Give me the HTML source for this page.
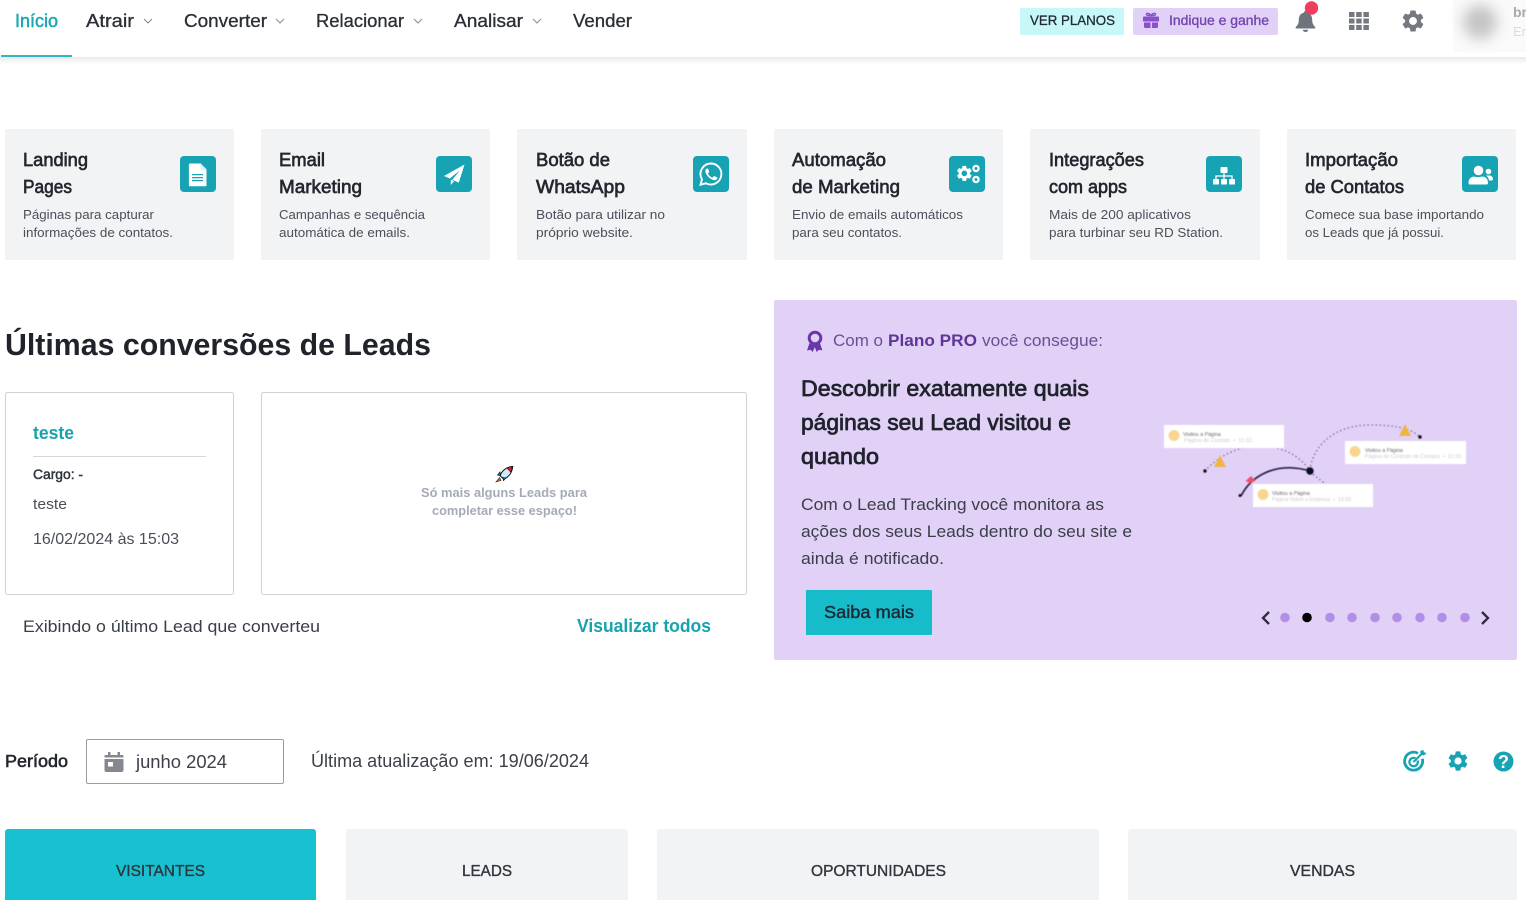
<!DOCTYPE html>
<html lang="pt-BR"><head><meta charset="utf-8"><title>RD Station</title>
<style>
html,body{margin:0;padding:0;background:#fff;width:1526px;height:900px;overflow:hidden}
svg{display:block;position:absolute;left:0;top:0}
text{font-family:"Liberation Sans",sans-serif;white-space:pre}
.nav{font-size:18px;fill:#2a2e36;stroke:#2a2e36;stroke-width:.3}
.t{font-size:18.500px;fill:#23262e;stroke:#23262e;stroke-width:.65}
.d{font-size:13px;fill:#4a4f5a}
.p{font-size:17px;fill:#3a3e48}
.h{font-size:22.500px;fill:#20232d;stroke:#20232d;stroke-width:.75}
.tab{font-size:16px;fill:#30343c;stroke:#30343c;stroke-width:.35}
</style></head><body>
<svg width="1526" height="900" viewBox="0 0 1526 900" xmlns="http://www.w3.org/2000/svg">
<defs>
<linearGradient id="sh" x1="0" y1="0" x2="0" y2="1"><stop offset="0" stop-color="#e9eaec"/><stop offset="1" stop-color="#fff"/></linearGradient>
<filter id="b6" x="-100%" y="-100%" width="300%" height="300%"><feGaussianBlur stdDeviation="7"/></filter>
<filter id="b1"><feGaussianBlur stdDeviation=".5"/></filter>
<path id="gear" d="M19.14 12.94c.04-.3.06-.61.06-.94 0-.32-.02-.64-.07-.94l2.03-1.58a.49.49 0 0 0 .12-.61l-1.92-3.32a.488.488 0 0 0-.59-.22l-2.39.96c-.5-.38-1.03-.7-1.62-.94l-.36-2.54a.484.484 0 0 0-.48-.41h-3.84c-.24 0-.43.17-.47.41l-.36 2.54c-.59.24-1.13.57-1.62.94l-2.39-.96c-.22-.08-.47 0-.59.22L2.74 8.87c-.12.21-.08.47.12.61l2.03 1.58c-.05.3-.09.63-.09.94s.02.64.07.94l-2.03 1.58a.49.49 0 0 0-.12.61l1.92 3.32c.12.22.37.29.59.22l2.39-.96c.5.38 1.03.7 1.62.94l.36 2.54c.05.24.24.41.48.41h3.84c.24 0 .44-.17.47-.41l.36-2.54c.59-.24 1.13-.56 1.62-.94l2.39.96c.22.08.47 0 .59-.22l1.92-3.32c.12-.22.07-.47-.12-.61l-2.01-1.58zM12 15.6A3.6 3.6 0 1 1 12 8.4a3.6 3.6 0 0 1 0 7.2z"/>
</defs>

<!-- header -->
<rect x="0" y="57" width="1526" height="7" fill="url(#sh)"/>
<rect x="1" y="55" width="71" height="2" fill="#2fb9c6"/>
<text x="15" y="27" font-size="18" fill="#17a9b5" stroke="#17a9b5" stroke-width=".5" textLength="43" lengthAdjust="spacingAndGlyphs">Início</text>
<text class="nav" x="86" y="27" textLength="48" lengthAdjust="spacingAndGlyphs">Atrair</text>
<text class="nav" x="184" y="27" textLength="83" lengthAdjust="spacingAndGlyphs">Converter</text>
<text class="nav" x="316" y="27" textLength="88" lengthAdjust="spacingAndGlyphs">Relacionar</text>
<text class="nav" x="454" y="27" textLength="69" lengthAdjust="spacingAndGlyphs">Analisar</text>
<text class="nav" x="573" y="27" textLength="59" lengthAdjust="spacingAndGlyphs">Vender</text>
<g fill="none" stroke="#8b8f96" stroke-width="1.100">
<path d="M144 19l4 4 4-4M276 19l4 4 4-4M414 19l4 4 4-4M533 19l4 4 4-4"/>
</g>
<rect x="1020" y="8" width="104" height="27" rx="2" fill="#c8f7fa"/>
<text x="1030" y="25" font-size="14" fill="#1f2a36" stroke="#1f2a36" stroke-width=".3" textLength="85" lengthAdjust="spacingAndGlyphs">VER PLANOS</text>
<rect x="1133" y="8" width="145" height="27" rx="2" fill="#e2d1f7"/>
<path d="M1144 22.500h6.500v5.500h-5.300a1.200 1.200 0 0 1-1.200-1.200zM1151.900 22.500h6.100v4.300a1.200 1.200 0 0 1-1.200 1.200h-4.900zM1143 17.500a1 1 0 0 1 1-1h14a1 1 0 0 1 1 1v4h-16z" fill="#8a50cc"/>
<path d="M1151 15.500c-2-3-5-2.500-4.500-.8.3 1 2.500.8 4.500.8zm0 0c2-3 5-2.500 4.500-.8-.3 1-2.500.8-4.500.8z" fill="none" stroke="#8a50cc" stroke-width="1.500"/>
<text x="1169" y="25" font-size="14" fill="#7445b0" stroke="#7445b0" stroke-width=".35" textLength="100" lengthAdjust="spacingAndGlyphs">Indique e ganhe</text>
<path d="M1305.500 11c1 0 1.700.7 1.700 1.700 3.500.8 5 3.600 5 7 0 3.800 1.200 5.300 3 7.300.5.600.2 1.500-.7 1.500h-18c-.9 0-1.200-.9-.7-1.500 1.800-2 3-3.500 3-7.300 0-3.400 1.500-6.200 5-7 0-1 .7-1.700 1.700-1.700z" fill="#6f747c"/>
<path d="M1302.800 29.800h5.400a2.700 2.200 0 0 1-5.400 0z" fill="#6f747c"/>
<circle cx="1311.500" cy="8" r="6.700" fill="#ee3d5f"/>
<g fill="#74787f">
<rect x="1349" y="12" width="5.500" height="5"/><rect x="1356.200" y="12" width="5.500" height="5"/><rect x="1363.400" y="12" width="5.500" height="5"/>
<rect x="1349" y="18.500" width="5.500" height="5"/><rect x="1356.200" y="18.500" width="5.500" height="5"/><rect x="1363.400" y="18.500" width="5.500" height="5"/>
<rect x="1349" y="25" width="5.500" height="5"/><rect x="1356.200" y="25" width="5.500" height="5"/><rect x="1363.400" y="25" width="5.500" height="5"/>
</g>
<use href="#gear" fill="#74787f" transform="translate(1399.800 7.800) scale(1.100)"/>
<rect x="1453" y="0" width="73" height="52" fill="#fafafa"/>
<circle cx="1480" cy="22" r="17" fill="#c4c4c4" filter="url(#b6)"/>
<text x="1513" y="17" font-size="14" font-weight="bold" fill="#a9a9a9">br</text>
<text x="1513" y="36" font-size="13" fill="#dcdcdc">En</text>

<!-- quick cards -->
<g fill="#f2f3f5">
<rect x="5" y="129" width="229" height="131" rx="1"/>
<rect x="261" y="129" width="229" height="131" rx="1"/>
<rect x="517" y="129" width="230" height="131" rx="1"/>
<rect x="774" y="129" width="229" height="131" rx="1"/>
<rect x="1030" y="129" width="230" height="131" rx="1"/>
<rect x="1287" y="129" width="229" height="131" rx="1"/>
</g>
<g fill="#17a3b3">
<rect x="180" y="156" width="36" height="36" rx="4"/>
<rect x="436" y="156" width="36" height="36" rx="4"/>
<rect x="693" y="156" width="36" height="36" rx="4"/>
<rect x="949" y="156" width="36" height="36" rx="4"/>
<rect x="1206" y="156" width="36" height="36" rx="4"/>
<rect x="1462" y="156" width="36" height="36" rx="4"/>
</g>
<!-- doc -->
<path d="M189 163.500h11.500l6 6v16a.8.8 0 0 1-.8.8h-16a.8.8 0 0 1-.8-.8v-21.200a.8.8 0 0 1 .8-.8z" fill="#fff"/>
<path d="M200.800 163.500v5.700h5.700zM192 174h11v1.300h-11zM192 177h11v1.300h-11zM192 180h11v1.300h-11z" fill="#17a3b3"/>
<path d="M200.500 163.200v6h6z" fill="#d9f3f6"/>
<!-- plane -->
<path d="M464.500 164.500l-20.500 11.500 5.800 2.500 10-8-7.500 9.300 6.500 3zM450.800 179.500v5.500l3.200-3.800z" fill="#fff"/>
<!-- whatsapp -->
<path d="M711 163.500a10.500 10.500 0 0 0-9 15.900l-1.500 5.300 5.500-1.400a10.500 10.500 0 1 0 5-19.800z" fill="none" stroke="#fff" stroke-width="1.900"/>
<path d="M707 168.500c-1 .3-1.800 1.500-1.600 2.900.4 3.800 5 8.400 9 8.800 1.400.1 2.600-.8 2.800-1.900.1-.5 0-.9-.2-1l-2.600-1.200c-.3-.1-.5 0-.7.200l-1 1.200c-.2.2-.4.200-.7.100-1.700-.7-3-2-3.900-3.800-.1-.3 0-.5.200-.7l.8-1c.2-.2.2-.4.100-.6l-1.100-2.600c-.2-.4-.6-.5-1.100-.4z" fill="#fff"/>
<!-- gears -->
<use href="#gear" fill="#fff" transform="translate(955 164) scale(.78)"/>
<g fill="none" stroke="#fff"><circle cx="976" cy="168.500" r="2.600" stroke-width="2.300"/><circle cx="976" cy="179.500" r="2.600" stroke-width="2.300"/></g>
<!-- sitemap -->
<g fill="#fff">
<rect x="1220.500" y="167" width="7" height="6" rx=".8"/>
<rect x="1213" y="179" width="6" height="5.500" rx=".8"/><rect x="1221" y="179" width="6" height="5.500" rx=".8"/><rect x="1229" y="179" width="6" height="5.500" rx=".8"/>
</g>
<path d="M1224 173v6M1216 179v-3h16v3" fill="none" stroke="#fff" stroke-width="1.300"/>
<!-- users -->
<circle cx="1478.500" cy="170.500" r="4.800" fill="#fff"/>
<path d="M1470 184.500c-1 0-1.500-.6-1.500-1.500 0-4 2.500-6.500 6-6.500 2 .8 5 .8 7.500 0 3.500 0 6 2.500 6 6.500 0 .9-.5 1.500-1.500 1.500z" fill="#fff"/>
<circle cx="1488.500" cy="171.500" r="2.800" fill="#fff"/>
<path d="M1486 175.500h3.500c2 0 3.500 1.500 3.500 3.500 0 1-.5 1.500-1.500 1.500h-2.500c-.2-2-1.300-3.800-3-5z" fill="#fff"/>

<text class="t" x="23" y="166" textLength="65" lengthAdjust="spacingAndGlyphs">Landing</text>
<text class="t" x="23" y="193" textLength="49" lengthAdjust="spacingAndGlyphs">Pages</text>
<text class="d" x="23" y="219" textLength="131" lengthAdjust="spacingAndGlyphs">Páginas para capturar</text>
<text class="d" x="23" y="237" textLength="150" lengthAdjust="spacingAndGlyphs">informações de contatos.</text>
<text class="t" x="279" y="166" textLength="46" lengthAdjust="spacingAndGlyphs">Email</text>
<text class="t" x="279" y="193" textLength="83" lengthAdjust="spacingAndGlyphs">Marketing</text>
<text class="d" x="279" y="219" textLength="146" lengthAdjust="spacingAndGlyphs">Campanhas e sequência</text>
<text class="d" x="279" y="237" textLength="131" lengthAdjust="spacingAndGlyphs">automática de emails.</text>
<text class="t" x="536" y="166" textLength="74" lengthAdjust="spacingAndGlyphs">Botão de</text>
<text class="t" x="536" y="193" textLength="89" lengthAdjust="spacingAndGlyphs">WhatsApp</text>
<text class="d" x="536" y="219" textLength="129" lengthAdjust="spacingAndGlyphs">Botão para utilizar no</text>
<text class="d" x="536" y="237" textLength="97" lengthAdjust="spacingAndGlyphs">próprio website.</text>
<text class="t" x="792" y="166" textLength="94" lengthAdjust="spacingAndGlyphs">Automação</text>
<text class="t" x="792" y="193" textLength="108" lengthAdjust="spacingAndGlyphs">de Marketing</text>
<text class="d" x="792" y="219" textLength="171" lengthAdjust="spacingAndGlyphs">Envio de emails automáticos</text>
<text class="d" x="792" y="237" textLength="110" lengthAdjust="spacingAndGlyphs">para seu contatos.</text>
<text class="t" x="1049" y="166" textLength="95" lengthAdjust="spacingAndGlyphs">Integrações</text>
<text class="t" x="1049" y="193" textLength="78" lengthAdjust="spacingAndGlyphs">com apps</text>
<text class="d" x="1049" y="219" textLength="142" lengthAdjust="spacingAndGlyphs">Mais de 200 aplicativos</text>
<text class="d" x="1049" y="237" textLength="174" lengthAdjust="spacingAndGlyphs">para turbinar seu RD Station.</text>
<text class="t" x="1305" y="166" textLength="93" lengthAdjust="spacingAndGlyphs">Importação</text>
<text class="t" x="1305" y="193" textLength="99" lengthAdjust="spacingAndGlyphs">de Contatos</text>
<text class="d" x="1305" y="219" textLength="179" lengthAdjust="spacingAndGlyphs">Comece sua base importando</text>
<text class="d" x="1305" y="237" textLength="139" lengthAdjust="spacingAndGlyphs">os Leads que já possui.</text>

<!-- leads -->
<text x="5" y="355" font-size="31" font-weight="bold" fill="#20232b" textLength="426" lengthAdjust="spacingAndGlyphs">Últimas conversões de Leads</text>
<rect x="5.500" y="392.500" width="228" height="202" rx="2" fill="#fff" stroke="#cfd1d4"/>
<rect x="261.500" y="392.500" width="485" height="202" rx="2" fill="#fff" stroke="#cfd1d4"/>
<text x="33" y="439" font-size="18" font-weight="bold" fill="#17a3ad" textLength="41" lengthAdjust="spacingAndGlyphs">teste</text>
<rect x="33" y="456" width="173" height="1" fill="#d5d7da"/>
<text x="33" y="479" font-size="13.500" fill="#2f333b" stroke="#2f333b" stroke-width=".45" textLength="50" lengthAdjust="spacingAndGlyphs">Cargo: -</text>
<text x="33" y="509" font-size="15" fill="#4a4e58" textLength="34" lengthAdjust="spacingAndGlyphs">teste</text>
<text x="33" y="544" font-size="16" fill="#4a4e58" textLength="146" lengthAdjust="spacingAndGlyphs">16/02/2024 às 15:03</text>
<!-- rocket -->
<path d="M512 466.500c-4.300.5-8 2.700-10.500 6.300l-1.500 2.700 3.800 3.800 2.700-1.600c3.700-2.600 5.800-6.400 6.300-11.200z" fill="#cfeaf6" stroke="#111" stroke-width="1"/>
<path d="M512 466.500c-1.900.2-3.600.8-5 1.700l3.800 3.900c.7-1.500 1.100-3.400 1.200-5.600z" fill="#d81f3f" stroke="#111" stroke-width=".6"/>
<path d="M500 472l-2.500 3 3 .6zM506 478l-2.500 2.500-.6-3z" fill="#2a86b8" stroke="#111" stroke-width=".7"/>
<path d="M499.500 477.500l-3.500 4.500 5-1.500z" fill="#c9663a" stroke="#222" stroke-width=".6"/>
<text x="421" y="497" font-size="13" font-weight="bold" fill="#a4abb6" textLength="166" lengthAdjust="spacingAndGlyphs">Só mais alguns Leads para</text>
<text x="432" y="515" font-size="13" font-weight="bold" fill="#a4abb6" textLength="145" lengthAdjust="spacingAndGlyphs">completar esse espaço!</text>
<text x="23" y="632" font-size="17" fill="#3a3e48" textLength="297" lengthAdjust="spacingAndGlyphs">Exibindo o último Lead que converteu</text>
<text x="577" y="632" font-size="18" font-weight="bold" fill="#17a3ad" textLength="134" lengthAdjust="spacingAndGlyphs">Visualizar todos</text>

<!-- promo -->
<rect x="774" y="300" width="743" height="360" rx="2" fill="#e2d1f7"/>
<circle cx="815" cy="338" r="5.800" fill="none" stroke="#6a36a8" stroke-width="3"/>
<path d="M809.500 343l-2.500 7.500 3.500-.8 2.200 2.300 2-5 2 5 2.200-2.300 3.500.8-2.500-7.500c-3 2.800-7.400 2.800-10.400 0z" fill="#6a36a8"/>
<text x="833" y="346" font-size="17" fill="#6b4f96" textLength="50" lengthAdjust="spacingAndGlyphs">Com o</text>
<text x="888" y="346" font-size="17" font-weight="bold" fill="#5f3597" textLength="89" lengthAdjust="spacingAndGlyphs">Plano PRO</text>
<text x="982" y="346" font-size="17" fill="#6b4f96" textLength="121" lengthAdjust="spacingAndGlyphs">você consegue:</text>
<text class="h" x="801" y="396" textLength="288" lengthAdjust="spacingAndGlyphs">Descobrir exatamente quais</text>
<text class="h" x="801" y="430" textLength="270" lengthAdjust="spacingAndGlyphs">páginas seu Lead visitou e</text>
<text class="h" x="801" y="464" textLength="78" lengthAdjust="spacingAndGlyphs">quando</text>
<text class="p" x="801" y="510" textLength="303" lengthAdjust="spacingAndGlyphs">Com o Lead Tracking você monitora as</text>
<text class="p" x="801" y="537" textLength="331" lengthAdjust="spacingAndGlyphs">ações dos seus Leads dentro do seu site e</text>
<text class="p" x="801" y="564" textLength="143" lengthAdjust="spacingAndGlyphs">ainda é notificado.</text>
<rect x="806" y="590" width="126" height="45" rx="1" fill="#17bccb"/>
<text x="824" y="618" font-size="17.500" fill="#1d2a38" stroke="#1d2a38" stroke-width=".45" textLength="90" lengthAdjust="spacingAndGlyphs">Saiba mais</text>

<!-- illustration -->
<g filter="url(#b1)">
<g fill="none" stroke="#2a1f50" stroke-width="1" stroke-dasharray="1 3">
<path d="M1205 471c10-12 35-28 60-25 20 2 35 10 45 25"/>
<path d="M1310 470c3-25 25-45 60-45 25 0 40 3 50 12"/>
<path d="M1310 472l18 14"/>
</g>
<path d="M1241 496c10-20 35-35 69-25" fill="none" stroke="#1a1238" stroke-width="1.500"/>
<circle cx="1205" cy="471" r="1.700" fill="#111"/><circle cx="1420" cy="437" r="1.700" fill="#111"/>
<circle cx="1310" cy="471" r="3.700" fill="#0c0820"/><circle cx="1240" cy="495.500" r="1.500" fill="#111"/>
<path d="M1220 455l6 12h-12z" fill="#f0b445"/>
<path d="M1405 424l6 12h-12z" fill="#f0b445"/>
<path d="M1251 476l4.500 5-6 2-4-2z" fill="#ef4f66"/>
<g fill="#fff">
<rect x="1164" y="425" width="120" height="23"/>
<rect x="1345" y="441" width="121" height="23"/>
<rect x="1253" y="484" width="120" height="23"/>
</g>
<g fill="#f8d68e">
<circle cx="1174" cy="435.500" r="5.500"/><circle cx="1355" cy="451.500" r="5.500"/><circle cx="1263" cy="494.500" r="5.500"/>
</g>
<text x="1183" y="436" font-size="5.500" fill="#444" textLength="38" lengthAdjust="spacingAndGlyphs">Visitou a Página</text>
<text x="1184" y="442" font-size="5.500" fill="#c8c8d0" textLength="68" lengthAdjust="spacingAndGlyphs">Página de Contato  •  11:32</text>
<text x="1365" y="452" font-size="5.500" fill="#444" textLength="38" lengthAdjust="spacingAndGlyphs">Visitou a Página</text>
<text x="1365" y="458" font-size="5.500" fill="#c8c8d0" textLength="96" lengthAdjust="spacingAndGlyphs">Página de Contrato de Compra  •  12:15</text>
<text x="1272" y="495" font-size="5.500" fill="#444" textLength="38" lengthAdjust="spacingAndGlyphs">Visitou a Página</text>
<text x="1272" y="501" font-size="5.500" fill="#c8c8d0" textLength="79" lengthAdjust="spacingAndGlyphs">Página Sobre a Empresa  •  13:30</text>
</g>

<!-- carousel -->
<path d="M1269 612l-6 6 6 6M1482 612l6 6-6 6" fill="none" stroke="#2f2a3c" stroke-width="2.300"/>
<g fill="#b28fe6">
<circle cx="1285" cy="617.500" r="4.800"/><circle cx="1330" cy="617.500" r="4.800"/><circle cx="1352" cy="617.500" r="4.800"/><circle cx="1375" cy="617.500" r="4.800"/><circle cx="1397" cy="617.500" r="4.800"/><circle cx="1420" cy="617.500" r="4.800"/><circle cx="1442" cy="617.500" r="4.800"/><circle cx="1465" cy="617.500" r="4.800"/>
</g>
<circle cx="1307" cy="617.500" r="4.800" fill="#000"/>

<!-- period -->
<text x="5" y="767" font-size="17.500" fill="#24272f" stroke="#24272f" stroke-width=".6" textLength="63" lengthAdjust="spacingAndGlyphs">Período</text>
<rect x="86.500" y="739.500" width="197" height="44" rx="1.500" fill="#fff" stroke="#9a9ca0"/>
<path d="M105.500 755h17a1 1 0 0 1 1 1v1.500h-19V756a1 1 0 0 1 1-1zM104.500 759h19v11a2 2 0 0 1-2 2h-15a2 2 0 0 1-2-2zM108 752h2.500v4H108zM117.500 752h2.500v4h-2.500z" fill="#85888f"/>
<rect x="108" y="762" width="5" height="4.500" fill="#fff"/>
<text x="136" y="768" font-size="18" fill="#3d4049" textLength="91" lengthAdjust="spacingAndGlyphs">junho 2024</text>
<text x="311" y="767" font-size="18" fill="#3d4049" textLength="278" lengthAdjust="spacingAndGlyphs">Última atualização em: 19/06/2024</text>
<!-- target icon -->
<g fill="none" stroke="#17a3b3">
<path d="M1418 753.300a9 9 0 1 0 4.300 5.500" stroke-width="2.800"/>
<path d="M1415.500 758.300a4.200 4.200 0 1 0 2 2.200" stroke-width="2.200"/>
<path d="M1413.500 762l8-8" stroke-width="2"/>
</g>
<path d="M1420 751.500l1 3 3 1 2.500-2.500-2.500-.8-.9-2.600z" fill="#17a3b3"/>
<use href="#gear" fill="#17a3b3" transform="translate(1446 749) scale(1)"/>
<circle cx="1503.500" cy="761.500" r="10" fill="#17a3b3"/>
<text x="1503.500" y="768" font-size="18" font-weight="bold" fill="#fff" text-anchor="middle">?</text>

<!-- tabs -->
<path d="M5 900V832a3 3 0 0 1 3-3h305a3 3 0 0 1 3 3v68z" fill="#17c1d1"/>
<path d="M346 900V832a3 3 0 0 1 3-3h276a3 3 0 0 1 3 3v68z" fill="#f2f3f5"/>
<path d="M657 900V832a3 3 0 0 1 3-3h436a3 3 0 0 1 3 3v68z" fill="#f2f3f5"/>
<path d="M1128 900V832a3 3 0 0 1 3-3h383a3 3 0 0 1 3 3v68z" fill="#f2f3f5"/>
<text class="tab" x="116" y="876" textLength="89" lengthAdjust="spacingAndGlyphs">VISITANTES</text>
<text class="tab" x="462" y="876" textLength="50" lengthAdjust="spacingAndGlyphs">LEADS</text>
<text class="tab" x="811" y="876" textLength="135" lengthAdjust="spacingAndGlyphs">OPORTUNIDADES</text>
<text class="tab" x="1290" y="876" textLength="65" lengthAdjust="spacingAndGlyphs">VENDAS</text>
</svg>
</body></html>
